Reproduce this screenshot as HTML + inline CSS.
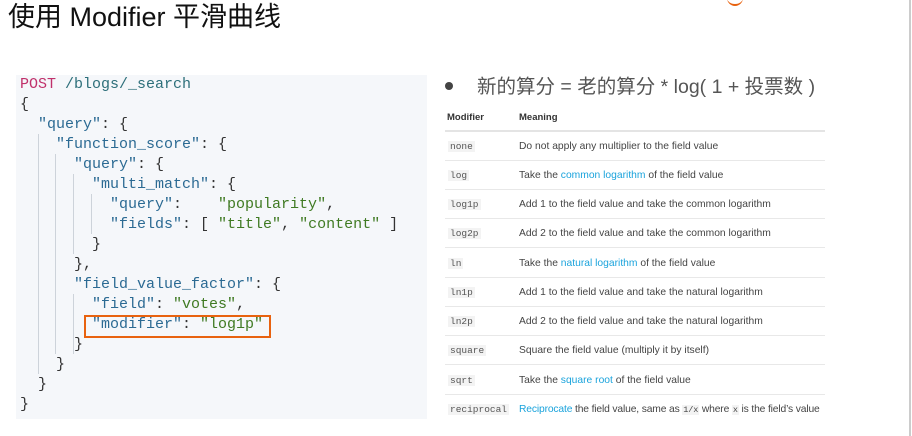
<!DOCTYPE html>
<html><head><meta charset="utf-8"><style>
body{margin:0;width:912px;height:436px;background:#fff;position:relative;overflow:hidden;font-family:"Liberation Sans","Noto Sans CJK SC",sans-serif}
.t{position:absolute;left:8px;top:0;font-size:27px;color:#111;line-height:34px;white-space:nowrap}
.code{position:absolute;left:16px;top:75px;width:411px;height:344px;background:#f5f7fa}
.code pre{margin:0;position:absolute;left:4px;top:0px;font-family:"Liberation Mono",monospace;font-size:15px;line-height:20px;color:#333}
.k{color:#2b6a93}.s{color:#3f7a22}.m{color:#c0306a}.p{color:#2d6f7a}
.g{position:absolute;width:1px;background:#cdd3da}
.box{position:absolute;left:84px;top:315px;width:183px;height:19px;border:2px solid #e8620f}
.bul{position:absolute;left:445px;top:70px;font-size:19.5px;color:#555;white-space:nowrap}
.bul b{display:inline-block;width:8px;height:8px;border-radius:50%;background:#444;margin-right:24px;vertical-align:middle;position:relative;top:-2px}
.row{position:absolute;left:445px;width:380px;height:29px;border-bottom:1px solid #e8e8e8;font-size:10.3px;color:#444}
.row .a{position:absolute;left:3px;top:10px;font-family:"Liberation Mono",monospace;font-size:9.5px;color:#555;background:#f3f3f3;padding:0 2px}
.row .b{position:absolute;left:74px;top:10px;white-space:nowrap}
.l{color:#1aa3dc}
code{font-family:"Liberation Mono",monospace;font-size:8.5px;background:#f3f3f3;padding:0 1px}
</style></head><body>
<div class="t">使用 Modifier 平滑曲线</div>
<div style="position:absolute;left:727px;top:-6px;width:16px;height:10px;border-radius:0 0 8px 8px;border-bottom:2px solid #e8620f"></div>
<div style="position:absolute;left:909px;top:0;width:2px;height:436px;background:#ccc"></div>
<div class="code">
<div class="g" style="left:22px;top:59px;height:240px"></div>
<div class="g" style="left:39px;top:79px;height:200px"></div>
<div class="g" style="left:57px;top:99px;height:80px"></div>
<div class="g" style="left:75px;top:119px;height:40px"></div>
<div class="g" style="left:57px;top:219px;height:60px"></div>
<pre><span class="m">POST</span> <span class="p">/blogs/_search</span>
{
  <span class="k">"query"</span>: {
    <span class="k">"function_score"</span>: {
      <span class="k">"query"</span>: {
        <span class="k">"multi_match"</span>: {
          <span class="k">"query"</span>:    <span class="s">"popularity"</span>,
          <span class="k">"fields"</span>: [ <span class="s">"title"</span>, <span class="s">"content"</span> ]
        }
      },
      <span class="k">"field_value_factor"</span>: {
        <span class="k">"field"</span>: <span class="s">"votes"</span>,
        <span class="k">"modifier"</span>: <span class="s">"log1p"</span>
      }
    }
  }
}</pre>
</div>
<div class="box"></div>
<div class="bul"><b></b>新的算分 = 老的算分 * log( 1 + 投票数 )</div>
<div class="row" style="top:102px;border-bottom:2px solid #e4e4e4;height:28px;font-weight:bold;color:#333"><span class="b" style="left:2px;font-size:9.5px;top:10px">Modifier</span><span class="b" style="font-size:9.5px;top:10px">Meaning</span></div>
<div class="row" style="top:131px"><span class="a">none</span><span class="b">Do not apply any multiplier to the field value</span></div>
<div class="row" style="top:160px"><span class="a">log</span><span class="b">Take the <span class="l">common logarithm</span> of the field value</span></div>
<div class="row" style="top:189px"><span class="a">log1p</span><span class="b">Add 1 to the field value and take the common logarithm</span></div>
<div class="row" style="top:218px"><span class="a">log2p</span><span class="b">Add 2 to the field value and take the common logarithm</span></div>
<div class="row" style="top:248px"><span class="a">ln</span><span class="b">Take the <span class="l">natural logarithm</span> of the field value</span></div>
<div class="row" style="top:277px"><span class="a">ln1p</span><span class="b">Add 1 to the field value and take the natural logarithm</span></div>
<div class="row" style="top:306px"><span class="a">ln2p</span><span class="b">Add 2 to the field value and take the natural logarithm</span></div>
<div class="row" style="top:335px"><span class="a">square</span><span class="b">Square the field value (multiply it by itself)</span></div>
<div class="row" style="top:365px"><span class="a">sqrt</span><span class="b">Take the <span class="l">square root</span> of the field value</span></div>
<div class="row" style="top:394px;border-bottom:none"><span class="a">reciprocal</span><span class="b" style="letter-spacing:-0.15px"><span class="l">Reciprocate</span> the field value, same as <code>1/x</code> where <code>x</code> is the field’s value</span></div>
</body></html>
